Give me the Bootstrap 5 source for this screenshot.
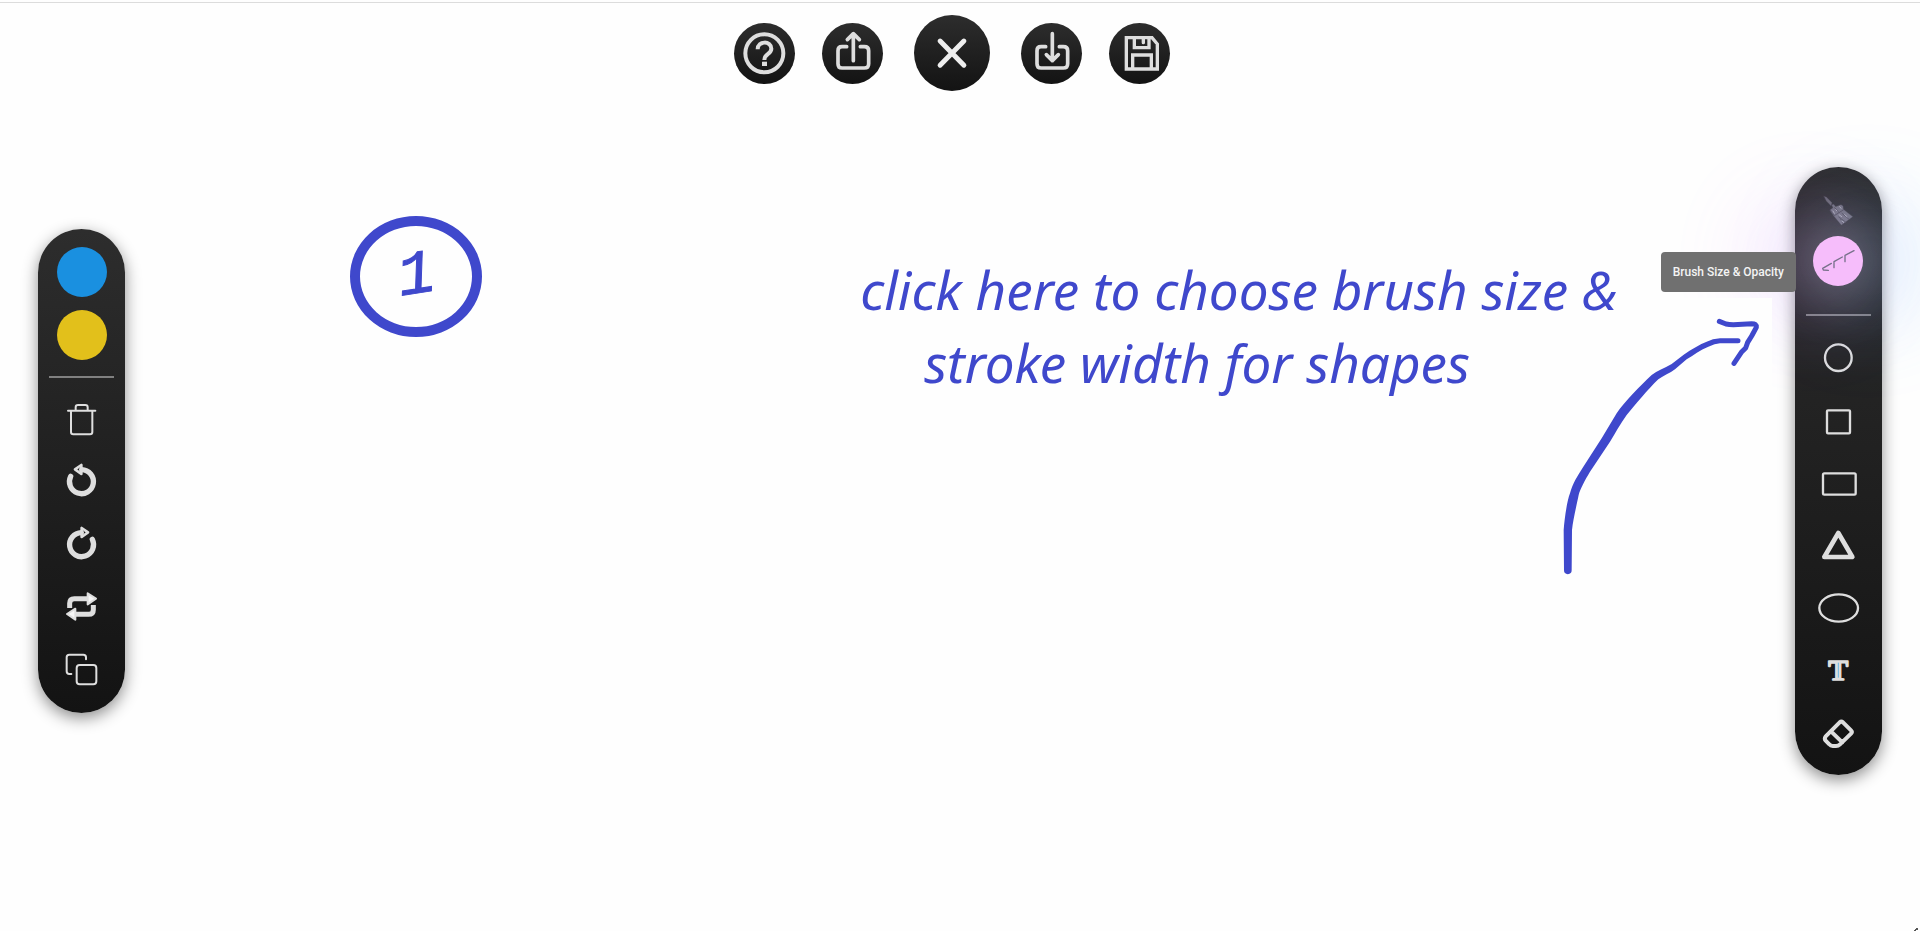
<!DOCTYPE html>
<html lang="en">
<head>
<meta charset="utf-8">
<meta name="viewport" content="width=device-width, initial-scale=1">
<title>Whiteboard</title>
<link href="https://cdn.jsdelivr.net/npm/bootstrap@5.3.0/dist/css/bootstrap.min.css" rel="stylesheet">
<style>
  :root { --ink: #3f48cc; --icon: #dedede; }
  body { background: #fefefe; font-family: Roboto, sans-serif; overflow: hidden; }
  .board { padding: 11px 38px 0; }
  .board::before { content: ""; position: absolute; inset: 2px 0 auto; height: 1px; background: #dcdcdc; }
  .tool { border: 0; padding: 0; background: none; border-radius: 50%; width: 50px; height: 50px; display: block; flex: none; }
  .tool svg { display: block; width: 100%; height: 100%; fill: none; stroke: var(--icon); stroke-linecap: round; stroke-linejoin: round; }
  .dark-fill { background: linear-gradient(#2d2d2d, #131313); }
  .actions { gap: 27px; padding-top: 4px; }
  .actions .tool { width: 61px; height: 61px; }
  .actions .tool-close { width: 76px; height: 76px; margin: 0 4px; }
  .toolbar-pill { width: 87px; border-radius: 44px; padding: 18px 18px 18px 19px; box-shadow: 0 5px 16px rgba(0,0,0,.45); z-index: 1; }
  .toolbar-pill.shapes { padding: 18px 19px 15px 18px; }
  .stack { gap: 13px; }
  .rule { width: 65px; height: 2px; margin: 16px -8px 15px; background: #808080; }
  .shapes .rule { margin: 28px -7px 16px; }
  .swatch-blue { background: #1a90e0; }
  .swatch-gold { background: #e2c01b; }
  .glow { margin-top: 1px; }
  .tool-size { background: #f6bdfb; box-shadow: 0 0 56px 14px rgba(255,255,255,.26), -28px 0 90px 28px rgba(225,100,255,.19), 30px 0 90px 34px rgba(80,180,255,.18); }
  .tip { top: 16px; right: calc(100% + 17px); height: 40px; padding: 0 12px; border-radius: 4px; background: #707070; color: #f4f4f4; font-size: 12px; font-weight: 500; line-height: 41px; z-index: 3; }
  .note { color: var(--ink); }
  .ring { left: 18.25%; top: 216px; width: 132px; height: 121px; border: 10px solid var(--ink); border-radius: 50%; font: italic 62px/1 "Liberation Mono", monospace; -webkit-text-stroke: 1px var(--ink); }
  .ring span { transform: rotate(-9deg); }
  .hint { left: 44.8%; top: 253px; font: italic 53px/73px "Noto Sans", sans-serif; z-index: 3; }
  .hint span { padding-left: 64px; }
  .arrow { right: 148px; top: 298px; width: 232px; height: 292px; background: #fefefe; z-index: 2; }
  .speck { right: 0; bottom: 0; }
</style>
</head>
<body>
<main class="board position-relative min-vh-100 d-flex justify-content-between align-items-center">

  <aside class="toolbar-pill dark-fill position-relative" aria-label="Edit tools">
    <div class="stack d-flex flex-column">
      <button class="tool swatch-blue" aria-label="Stroke colour"></button>
      <button class="tool swatch-gold" aria-label="Fill colour"></button>
    </div>
    <div class="rule"></div>
    <div class="stack d-flex flex-column">
      <button class="tool" aria-label="Delete"><svg viewBox="111 534 150 150" stroke-width="6"><path d="M144 587H226M153 589V651Q153 658 160 658H210Q217 658 217 651V589M167 586V577Q167 570 174 570H196Q203 570 203 577V586"/></svg></button>
      <button class="tool" aria-label="Undo"><svg viewBox="111 18 150 150" stroke-width="16"><path d="M152 79A36 36 0 1 0 185 59"/><path d="M165 58L184 45V72Z" stroke-width="8"/></svg></button>
      <button class="tool" aria-label="Redo"><svg viewBox="111 207 150 150" stroke-width="16"><path d="M217 268A36 36 0 1 1 184 248"/><path d="M204 247L185 234V261Z" stroke-width="8"/></svg></button>
      <button class="tool" aria-label="Swap"><svg viewBox="111 396 150 150" stroke-width="15"><path stroke-linecap="butt" d="M149 474V460Q149 446 163 446H202M220 465V479Q220 493 206 493H167"/><path d="M203 430L228 446L203 463ZM166 476L141 492L166 509Z" fill="#f6f6f6" stroke-width="6"/></svg></button>
      <button class="tool" aria-label="Duplicate"><svg viewBox="111 585 150 150" stroke-width="6"><rect x="170" y="645" width="59" height="58" rx="9"/><path d="M154 672H148Q140 672 140 664V622Q140 614 148 614H190Q198 614 198 622V628"/></svg></button>
    </div>
  </aside>

  <header class="actions d-flex justify-content-center align-items-center align-self-start flex-grow-1 pe-3">
    <button class="tool dark-fill" aria-label="Help"><svg viewBox="42 69 183 183" stroke-width="12"><circle cx="133" cy="160" r="57"/><path stroke-linecap="butt" d="M113 148C113 121 154 122 154 146C154 163 133 160 133 180"/><path d="M126 185H141V198H126Z" fill="#dedede" stroke="none"/></svg></button>
    <button class="tool dark-fill" aria-label="Share"><svg viewBox="306 69 183 183" stroke-width="11"><path d="M380 140H366Q354 140 354 152V191Q354 204 366 204H433Q446 204 446 191V152Q446 140 433 140H421M400 182V102M382 119L400 101L418 119"/></svg></button>
    <button class="tool tool-close dark-fill" aria-label="Close"><svg viewBox="582 45 230 230" stroke-width="15"><path stroke="#eee" d="M661 124L733 197M733 124L661 197"/></svg></button>
    <button class="tool dark-fill" aria-label="Import"><svg viewBox="216 69 183 183" stroke-width="11"><path d="M290 140H276Q264 140 264 152V191Q264 204 276 204H343Q356 204 356 191V152Q356 140 343 140H331M310 101V182M292 164L310 182L328 164"/></svg></button>
    <button class="tool dark-fill" aria-label="Save"><svg viewBox="477 69 183 183" stroke-width="10"><path stroke-linejoin="miter" d="M529 113H606L622 132V207H529ZM553 113V143H597V113M548 207V165H604V207M580 113V128"/></svg></button>
  </header>

  <aside class="toolbar-pill shapes dark-fill position-relative" aria-label="Drawing tools">
    <button class="tool" aria-label="Brush"><svg viewBox="520 225 150 150" stroke="none"><path d="M553 259L561 262L577 278L574 287L560 273Z" fill="#67656d" stroke="#4b4952"/><path d="M571 300L580 293L576 285L582 283L588 290L604 284L610 288L611 298L639 320L605 345L583 319Z" fill="#6f6d76" stroke="#4c4a53"/><path d="M572 301L584 317L612 299M585 293L597 307M597 321L618 336M607 310L627 327M603 327L609 340" stroke="#4c4a53" stroke-width="3"/><path d="M588 299L592 303M600 290L604 295M580 303L584 310M598 314L606 320M615 314L622 320M606 333L612 337" stroke="#aaa8b0" stroke-width="3"/></svg></button>
    <div class="glow position-relative">
      <button class="tool tool-size" aria-label="Brush size and opacity" aria-describedby="size-tip"><svg viewBox="520 380 150 150" stroke-width="4"><path stroke="#77718a" d="M566 483L551 482L549 477L575 462M583 475V457L608 443M616 457V438L643 424"/></svg></button>
      <div id="size-tip" class="tip position-absolute text-nowrap" role="tooltip">Brush Size &amp; Opacity</div>
    </div>
    <div class="rule"></div>
    <div class="stack d-flex flex-column">
      <button class="tool" aria-label="Circle"><svg viewBox="99 6 150 150" stroke-width="7"><circle cx="175" cy="83" r="40"/></svg></button>
      <button class="tool" aria-label="Square"><svg viewBox="99 195 150 150" stroke-width="7"><rect x="141" y="241" width="69" height="69" rx="3"/></svg></button>
      <button class="tool" aria-label="Rectangle"><svg viewBox="99 384 150 150" stroke-width="7"><rect x="129" y="430" width="98" height="64" rx="4"/></svg></button>
      <button class="tool" aria-label="Triangle"><svg viewBox="99 573 150 150" stroke-width="14"><path d="M175 609L217 681H133Z"/></svg></button>
      <button class="tool" aria-label="Ellipse"><svg viewBox="99 72 150 150" stroke-width="7"><ellipse cx="176" cy="144" rx="58" ry="41"/></svg></button>
      <button class="tool" aria-label="Text"><svg viewBox="99 261 150 150"><text x="175" y="361" text-anchor="middle" font-family="Liberation Serif, serif" font-weight="700" font-size="90" fill="#dedede" stroke="#dedede" stroke-width="5">T</text><path d="M175 308V353" stroke="#67b7e6" stroke-width="3" stroke-linecap="butt"/></svg></button>
      <button class="tool" aria-label="Eraser"><svg viewBox="99 450 150 150" stroke-width="12"><path d="M179 487Q184 483 189 487L213 511Q218 516 213 521L180 553Q175 558 168 558H158Q152 558 148 553L137 542Q132 536 137 529ZM153 514L187 547"/></svg></button>
    </div>
  </aside>

  <div class="note ring position-absolute d-flex justify-content-center align-items-center"><span>1</span></div>
  <p class="note hint position-absolute text-nowrap m-0">click here to choose brush size &amp;<br><span>stroke width for shapes</span></p>
  <svg class="arrow position-absolute" viewBox="0 -6 696 876" aria-hidden="true">
    <path fill="#3f48cc" d="M72 811L71 690C74 650 82 600 90 580C98 550 112 528 130 500L185 415L230 340C255 303 300 258 335 225C352 212 372 206 395 192L430 165C455 147 480 133 500 125Q518 116 540 115H594A7 7 0 0 1 594 130H540Q525 131 505 140C480 150 460 166 440 178L405 208C390 220 370 227 355 238C325 266 285 316 260 345C240 372 225 402 210 425L150 515C135 540 120 568 116 585C110 615 99 660 96 690L95 811A11 11 0 0 1 72 811Z"/>
    <path fill="none" stroke="#3f48cc" stroke-width="15" stroke-linecap="round" stroke-linejoin="round" d="M538 64L558 72Q567 74 580 74L635 71Q650 71 649 82L635 108L623 127L617 144L604 157L582 190"/>
  </svg>
  <svg class="speck position-absolute" width="6" height="3" viewBox="0 0 6 3" aria-hidden="true"><path d="M0 2H1V1H2V0H4V2H2V3H0Z" fill="#555"/></svg>
</main>
<script src="https://cdn.jsdelivr.net/npm/bootstrap@5.3.0/dist/js/bootstrap.bundle.min.js"></script>
</body>
</html>
